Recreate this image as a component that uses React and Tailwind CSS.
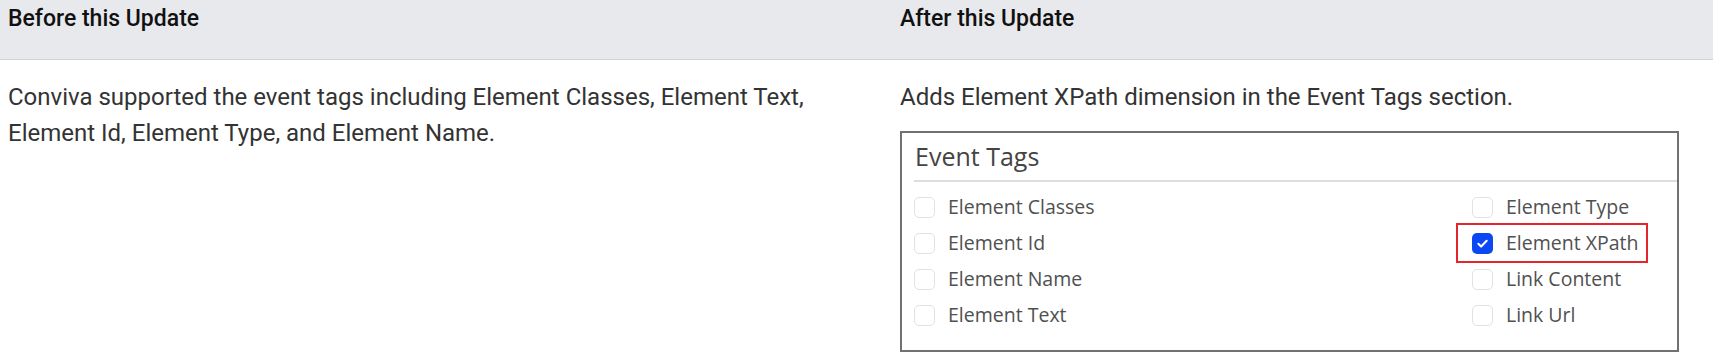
import React from 'react';

const leftTags = ['Element Classes', 'Element Id', 'Element Name', 'Element Text'];
const rightTags = [
  { label: 'Element Type' },
  { label: 'Element XPath', checked: true, marked: true },
  { label: 'Link Content' },
  { label: 'Link Url' },
];

function TagRow({ label, checked, marked }) {
  return (
    <div className="relative flex items-center h-[36px]">
      {marked && (
        <div className="absolute left-[-16px] top-[-2px] w-[192px] h-[40px] border-2 border-[#e3262e]" />
      )}
      {checked ? (
        <span className="flex items-center justify-center w-[21px] h-[21px] rounded-[5px] bg-[#0b47f3]">
          <svg width="13" height="13" viewBox="0 0 14 14" fill="none">
            <path d="M2.5 7.3l3 3 6-6.3" stroke="#fff" strokeWidth="2.2" strokeLinecap="round" strokeLinejoin="round" />
          </svg>
        </span>
      ) : (
        <span className="w-[21px] h-[21px] rounded-[5px] border border-[#e2e2e2] bg-white" />
      )}
      <span className="ml-[13px] text-[19.5px] leading-[24px] text-[#505050]">{label}</span>
    </div>
  );
}

export default function App() {
  return (
    <div className="w-[1713px] h-[364px] bg-white overflow-hidden" style={{ fontFamily: 'Roboto, "Liberation Sans", sans-serif' }}>
      <div className="grid grid-cols-[892px_1fr] h-[60px] bg-[#e8e9ed] border-b border-[#d2d3d6]">
        <div className="px-2 pt-[4px] text-[23px] leading-[30px] font-medium text-[#111]">Before this Update</div>
        <div className="px-2 pt-[4px] text-[23px] leading-[30px] font-medium text-[#111]">After this Update</div>
      </div>

      <div className="grid grid-cols-[892px_1fr] pt-[19px]">
        <div className="px-2 text-[24px] leading-[36px] text-[#333]">
          Conviva supported the event tags including Element Classes, Element Text,
          <br />
          Element Id, Element Type, and Element Name.
        </div>
        <div className="px-2">
          <p className="text-[24px] leading-[36px] text-[#333]">Adds Element XPath dimension in the Event Tags section.</p>

          <div
            className="mt-[16px] w-[779px] h-[221px] border-2 border-[#717171]"
            style={{ fontFamily: '"Open Sans", "Liberation Sans", sans-serif' }}
          >
            <div className="ml-[12px] pt-[7px] h-[49px] border-b-2 border-[#dddddd]">
              <h3 className="pl-[1px] text-[25px] leading-[32px] text-[#444]">Event Tags</h3>
            </div>
            <div className="grid grid-cols-[558px_1fr] pl-[12px] pt-[7px]">
              <div className="flex flex-col">
                {leftTags.map((t) => (
                  <TagRow key={t} label={t} />
                ))}
              </div>
              <div className="flex flex-col">
                {rightTags.map((t) => (
                  <TagRow key={t.label} {...t} />
                ))}
              </div>
            </div>
          </div>
        </div>
      </div>
    </div>
  );
}
